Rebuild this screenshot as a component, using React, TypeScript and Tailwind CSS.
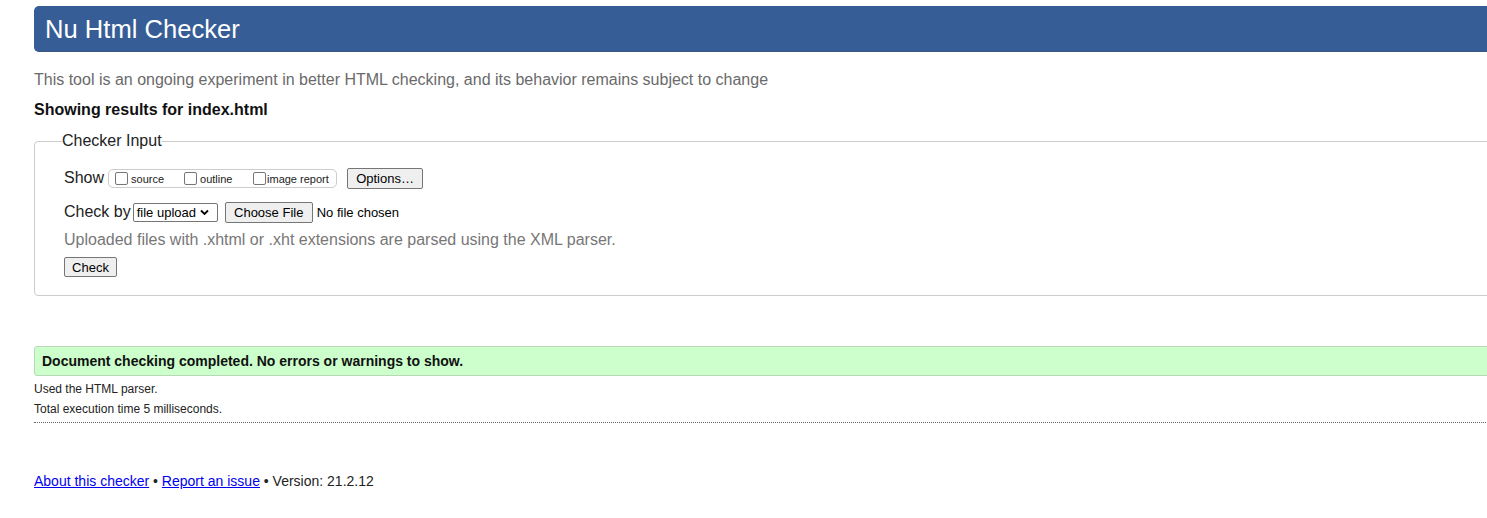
import React from "react";

function Box() {
  return <span className="inline-block w-[13px] h-[13px] border border-[#767676] rounded-[2px] bg-white shrink-0" />;
}

export default function App() {
  return (
    <div className="w-[1487px] h-[518px] overflow-hidden bg-white font-['Liberation_Sans',Arial,sans-serif] text-[#222]">
      <div className="w-[1520px] pl-[34px]">
        <div className="mt-[6px] h-[46px] bg-[#365d95] rounded-l-[5px] border-b border-[#3a5a86] flex items-center pl-[11px]">
          <h1 className="text-[25.6px] leading-[30px] text-white">Nu Html Checker</h1>
        </div>
        <p className="mt-[19px] text-[16px] leading-[18px] text-[#6a6a6a]">
          This tool is an ongoing experiment in better HTML checking, and its behavior remains subject to change
        </p>
        <h2 className="mt-[12px] text-[16px] leading-[18px] font-bold text-[#111]">Showing results for index.html</h2>

        <fieldset className="mt-[13px] border border-[#cccccc] rounded-[4px] pl-[29px] pb-[18px]">
          <legend className="-ml-[2px] text-[16px] leading-[18px] text-[#222]">Checker Input</legend>

          <div className="mt-[17px] h-[22px] flex items-center">
            <span className="text-[16px] leading-[18px]">Show</span>
            <div className="ml-[4px] h-[19px] w-[229px] border border-[#cccccc] rounded-[5px] flex items-center pl-[6px] text-[11px] leading-[13px]">
              <label className="w-[69px] flex items-center">
                <Box />
                <span className="ml-[3px] mt-[3px]">source</span>
              </label>
              <label className="w-[69px] flex items-center">
                <Box />
                <span className="ml-[3px] mt-[3px]">outline</span>
              </label>
              <label className="flex items-center">
                <Box />
                <span className="ml-[1px] mt-[3px]">image report</span>
              </label>
            </div>
            <button className="ml-[10px] h-[21px] w-[76px] border border-[#767676] rounded-[2px] bg-[#efefef] text-[13px] leading-[15px] text-black">
              Options…
            </button>
          </div>

          <div className="mt-[12px] h-[22px] flex items-center">
            <span className="text-[16px] leading-[18px]">Check by</span>
            <div className="ml-[2px] h-[19px] w-[85px] border border-[#767676] rounded-[2px] bg-white flex items-center pl-[3px] text-[13px] leading-[15px] text-black">
              <span>file upload</span>
              <svg className="ml-[4px]" width="9" height="7" viewBox="0 0 9 7">
                <path d="M1 1.5 L4.5 5 L8 1.5" fill="none" stroke="#000" strokeWidth="1.8" />
              </svg>
            </div>
            <button className="ml-[7px] h-[21px] w-[88px] border border-[#767676] rounded-[2px] bg-[#efefef] text-[13px] leading-[15px] text-black">
              Choose File
            </button>
            <span className="ml-[4px] text-[13px] leading-[15px] text-black">No file chosen</span>
          </div>

          <p className="mt-[8px] text-[16px] leading-[18px] text-[#777]">
            Uploaded files with .xhtml or .xht extensions are parsed using the XML parser.
          </p>

          <button className="mt-[8px] h-[20px] w-[53px] border border-[#767676] rounded-[2px] bg-[#efefef] text-[13px] leading-[15px] text-black block">
            Check
          </button>
        </fieldset>

        <div className="mt-[50px] h-[30px] bg-[#ccffcc] border border-[#b8d8b8] rounded-l-[3px] flex items-center pl-[7px]">
          <span className="text-[14px] leading-[16px] font-bold text-[#111]">Document checking completed. No errors or warnings to show.</span>
        </div>
        <p className="mt-[3px] text-[12px] leading-[20px] text-[#222]">Used the HTML parser.</p>
        <p className="text-[12px] leading-[20px] text-[#222]">Total execution time 5 milliseconds.</p>
        <div className="mt-[3px] border-t border-dotted border-[#666]" />

        <p className="mt-[50px] text-[14px] leading-[16px] text-[#222]">
          <a href="#" className="text-[#0000ee] underline">About this checker</a>
          {" • "}
          <a href="#" className="text-[#0000ee] underline">Report an issue</a>
          {" • Version: 21.2.12"}
        </p>
      </div>
    </div>
  );
}
